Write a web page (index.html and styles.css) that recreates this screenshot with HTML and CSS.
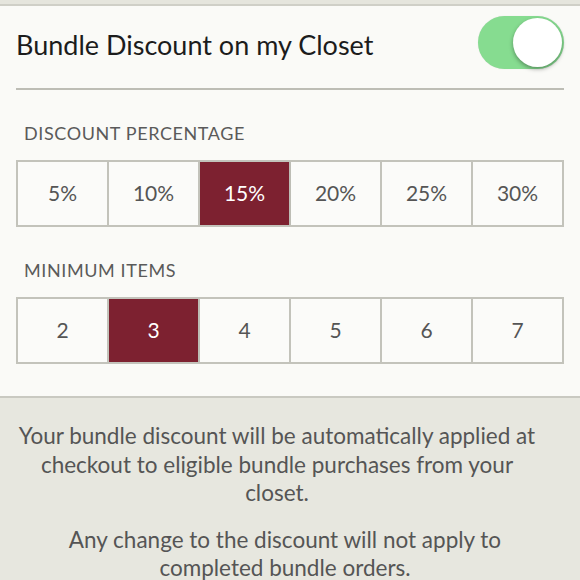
FILE: index.html
```html
<!DOCTYPE html>
<html lang="en">
<head>
    <meta charset="UTF-8">
    <meta name="viewport" content="width=device-width, initial-scale=1.0">
    <title>Bundle Discount</title>
    <link rel="stylesheet" href="styles.css">
</head>
<body>
    <div class="top-strip"></div>
    <div class="panel">
        <div class="toggle-row">
            <span class="title">Bundle Discount on my Closet</span>
            <div class="toggle on"><div class="knob"></div></div>
        </div>
        <div class="section-label">DISCOUNT PERCENTAGE</div>
        <div class="options">
            <div class="option">5%</div>
            <div class="option">10%</div>
            <div class="option selected">15%</div>
            <div class="option">20%</div>
            <div class="option">25%</div>
            <div class="option">30%</div>
        </div>
        <div class="section-label">MINIMUM ITEMS</div>
        <div class="options">
            <div class="option">2</div>
            <div class="option selected">3</div>
            <div class="option">4</div>
            <div class="option">5</div>
            <div class="option">6</div>
            <div class="option">7</div>
        </div>
    </div>
    <div class="info">
        <p class="note-auto">Your bundle discount will be automatically applied at checkout to eligible bundle purchases from your closet.</p>
        <p class="note-change">Any change to the discount will not apply to completed bundle orders.</p>
    </div>
</body>
</html>
```

FILE: styles.css
```css
* {
    margin: 0;
    padding: 0;
    box-sizing: border-box;
}
body {
    width: 580px;
    height: 580px;
    overflow: hidden;
    background: #e7e7df;
    font-family: Lato, "Open Sans", sans-serif;
}
.top-strip {
    height: 6px;
    background: #e5e5dd;
    border-bottom: 2px solid #cfcfc7;
}
.panel {
    background: #fafaf7;
    padding: 0 16px 32px;
    border-bottom: 2px solid #c9c9c1;
}
.toggle-row {
    display: flex;
    align-items: center;
    justify-content: space-between;
    height: 84px;
    border-bottom: 2px solid #bdbdb5;
}
.title {
    font-size: 27px;
    color: #1c1c1c;
    margin-top: -6px;
}
.toggle {
    width: 86px;
    height: 53px;
    border-radius: 27px;
    background: #86dc90;
    display: flex;
    align-items: center;
    justify-content: flex-end;
    padding: 2px;
    margin-top: -10px;
    box-shadow: 0 0 1px rgba(0, 0, 0, 0.15);
}
.knob {
    width: 49px;
    height: 49px;
    border-radius: 50%;
    background: #fff;
    box-shadow: 0 2px 4px rgba(0, 0, 0, 0.35);
}
.section-label {
    font-size: 18px;
    color: #5a5a5a;
    padding: 32px 0 0 8px;
    height: 70px;
    letter-spacing: 0.6px;
}
.options {
    display: grid;
    grid-template-columns: repeat(6, 1fr);
    border: 2px solid #c3c3bb;
    border-right: none;
    height: 67px;
}
.option {
    display: flex;
    align-items: center;
    justify-content: center;
    padding-bottom: 3px;
    border-right: 2px solid #c3c3bb;
    font-size: 21px;
    color: #555;
    background: #fbfbf9;
}
.option.selected {
    background: #7d2130;
    color: #fff;
    border-right-color: #bdbdb5;
}
.info {
    padding: 24px 10px 0;
    text-align: center;
    color: #555;
    font-size: 22.5px;
    line-height: 28.5px;
}
.info p {
    margin-bottom: 18px;
}
.note-auto {
    padding-right: 26px;
}
.note-change {
    padding: 0 20px 0 10px;
}
```
